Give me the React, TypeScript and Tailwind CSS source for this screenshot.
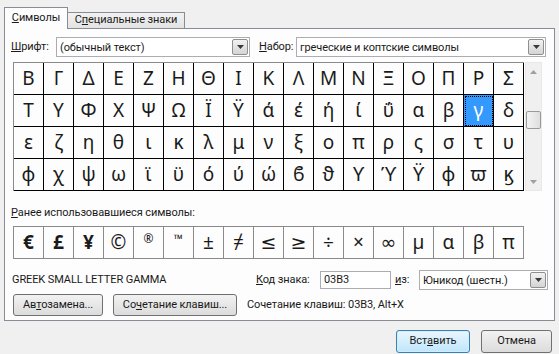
import React from 'react'

const rows: string[][] = [
	['Β', 'Γ', 'Δ', 'Ε', 'Ζ', 'Η', 'Θ', 'Ι', 'Κ', 'Λ', 'Μ', 'Ν', 'Ξ', 'Ο', 'Π', 'Ρ', 'Σ'],
	['Τ', 'Υ', 'Φ', 'Χ', 'Ψ', 'Ω', 'Ϊ', 'Ϋ', 'ά', 'έ', 'ή', 'ί', 'ΰ', 'α', 'β', 'γ', 'δ'],
	['ε', 'ζ', 'η', 'θ', 'ι', 'κ', 'λ', 'μ', 'ν', 'ξ', 'ο', 'π', 'ρ', 'ς', 'σ', 'τ', 'υ'],
	['φ', 'χ', 'ψ', 'ω', 'ϊ', 'ϋ', 'ό', 'ύ', 'ώ', 'ϐ', 'ϑ', 'ϒ', 'ϓ', 'ϔ', 'ϕ', 'ϖ', 'ϗ']
]

const recent = ['€', '£', '¥', '©', '®', '™', '±', '≠', '≤', '≥', '÷', '×', '∞', 'µ', 'α', 'β', 'π']

const ui = "font-['Roboto','Noto_Sans',sans-serif] text-[11px] tracking-[-0.1px] text-[#1a1a1a]"
const glyph = "font-['Noto_Sans','DejaVu_Sans',sans-serif] tracking-normal"

function DropButton() {
	return (
		<div className="w-[16px] h-[16px] mr-px flex items-center justify-center border border-[#8e8f8f] rounded-[2px] bg-gradient-to-b from-[#f2f2f2] to-[#d4d4d4]">
			<svg width="7" height="4" viewBox="0 0 7 4">
				<path d="M0 0 L7 0 L3.5 4 Z" fill="#3a3a3a" />
			</svg>
		</div>
	)
}

function Select({ value, className }: { value: string; className: string }) {
	return (
		<div className={`h-[20px] flex items-center justify-between border border-[#abadb3] bg-white pl-[3px] ${className}`}>
			<span className="leading-none whitespace-nowrap">{value}</span>
			<DropButton />
		</div>
	)
}

function Btn({ children, className = '' }: { children: React.ReactNode; className?: string }) {
	return (
		<div
			className={`h-[22px] flex items-center justify-center rounded-[3px] border border-[#707070] bg-gradient-to-b from-[#f2f2f2] to-[#dcdcdc] ${className}`}
		>
			{children}
		</div>
	)
}

export default function App() {
	return (
		<div className={`w-[559px] h-[354px] bg-[#f0f0f0] overflow-hidden ${ui}`}>
			{/* tabs */}
			<div className="flex items-end h-[28px] pl-[4px]">
				<div className="relative z-10 -mb-px w-[64px] h-[22px] border border-b-0 border-[#898c95] bg-[#fdfdfd] flex items-center justify-center pb-[1px]">
					<span>
						<span className="underline">С</span>имволы
					</span>
				</div>
				<div className="w-[117px] h-[16px] border border-l-0 border-b-0 border-[#898c95] bg-gradient-to-b from-[#f2f2f2] to-[#e3e3e3] flex items-center justify-center">
					<span>
						С<span className="underline">п</span>ециальные знаки
					</span>
				</div>
			</div>

			{/* panel */}
			<div className="ml-[4px] w-[551px] h-[293px] border border-[#898c95] bg-[#fdfdfd] pl-[6px] pt-[8px]">
				<div className="flex items-center h-[20px]">
					<span className="w-[45px] whitespace-nowrap">
						<span className="underline">Ш</span>рифт:
					</span>
					<Select value="(обычный текст)" className="w-[194px]" />
					<span className="ml-[9px] w-[37px] whitespace-nowrap">
						<span className="underline">Н</span>абор:
					</span>
					<Select value="греческие и коптские символы" className="w-[250px]" />
				</div>

				{/* symbol grid */}
				<div className="flex mt-[5px] ml-[2px]">
					<div className="border-l border-t border-[#8a8a8a]">
						{rows.map((row, r) => (
							<div key={r} className="flex">
								{row.map((ch, c) => {
									const sel = r === 1 && c === 15
									return (
										<div
											key={c}
											className={`w-[30px] h-[32px] border-r border-b border-black flex items-center justify-center ${glyph} text-[19px] leading-none ${
												sel ? 'bg-[#3399ff] text-white outline outline-1 outline-dotted outline-black -outline-offset-2' : ''
											}`}
										>
											{ch}
										</div>
									)
								})}
							</div>
						))}
					</div>
					<div className="ml-px w-[17px] h-[129px] bg-[#f0f0f0] border border-[#e8e8e8] flex flex-col items-center">
						<div className="h-[17px] flex items-center justify-center">
							<svg width="7" height="4" viewBox="0 0 7 4">
								<path d="M0 4 L7 4 L3.5 0 Z" fill="#a0a0a0" />
							</svg>
						</div>
						<div className="mt-[31px] w-[15px] h-[18px] rounded-[2px] border border-[#9a9a9a] bg-gradient-to-r from-[#f4f4f4] to-[#dedede]" />
						<div className="mt-auto h-[17px] flex items-center justify-center">
							<svg width="7" height="4" viewBox="0 0 7 4">
								<path d="M0 0 L7 0 L3.5 4 Z" fill="#a0a0a0" />
							</svg>
						</div>
					</div>
				</div>

				<div className="mt-[14px] h-[16px] leading-[16px]">
					<span className="underline">Р</span>анее использовавшиеся символы:
				</div>

				{/* recent */}
				<div className="mt-[5px] ml-[2px] flex w-fit border-l border-t border-[#8a8a8a]">
					{recent.map((ch, i) => (
						<div
							key={i}
							className={`w-[30px] h-[32px] border-r border-b border-[#8a8a8a] flex items-center justify-center ${glyph} leading-none ${
								ch === '®' || ch === '™' ? 'text-[12px] pb-[8px]' : 'text-[19px]'
							} ${i < 3 ? 'font-bold' : ''}`}
						>
							{ch}
						</div>
					))}
				</div>

				<div className="mt-[12px] flex items-center h-[18px]">
					<span className="w-[245px] pl-px">GREEK SMALL LETTER GAMMA</span>
					<span className="w-[64px] whitespace-nowrap">
						<span className="underline">К</span>од знака:
					</span>
					<div className="w-[71px] h-[18px] border border-[#abadb3] bg-white pl-[3px] flex items-center">03B3</div>
					<span className="ml-[4px] w-[24px]">
						<span className="underline">и</span>з:
					</span>
					<Select value="Юникод (шестн.)" className="w-[129px] h-[19px]" />
				</div>

				<div className="mt-[5px] flex items-center">
					<Btn className="ml-[2px] w-[90px]">
						<span>
							Ав<span className="underline">т</span>озамена...
						</span>
					</Btn>
					<Btn className="ml-[10px] w-[124px]">
						<span>
							Со<span className="underline">ч</span>етание клавиш...
						</span>
					</Btn>
					<span className="ml-[10px]">Сочетание клавиш: 03B3, Alt+X</span>
				</div>
			</div>

			{/* dialog buttons */}
			<div className="flex justify-end pr-[7px] mt-[9px] gap-[11px]">
				<div className="w-[74px] h-[23px] flex items-center justify-center rounded-[3px] border border-[#3c7fb1] bg-gradient-to-b from-[#eaf6fd] to-[#bee6fd] shadow-[inset_0_0_0_1px_#d0eefd]">
					<span>
						Вст<span className="underline">а</span>вить
					</span>
				</div>
				<div className="w-[71px] h-[23px] flex items-center justify-center rounded-[3px] border border-[#707070] bg-gradient-to-b from-[#f2f2f2] to-[#dcdcdc]">
					Отмена
				</div>
			</div>
		</div>
	)
}
